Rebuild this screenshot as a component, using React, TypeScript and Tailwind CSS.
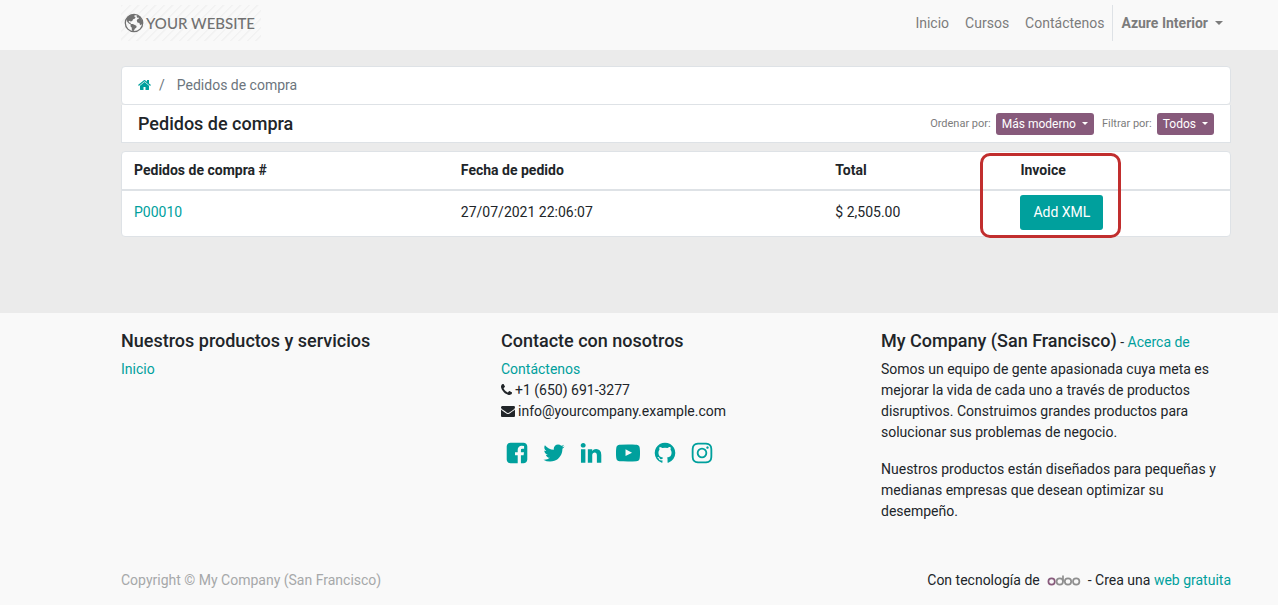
import React from 'react';

const ICONS = {
  home: 'M1472 992v480q0 26-19 45t-45 19h-384v-384h-256v384h-384q-26 0-45-19t-19-45v-480q0-1 .5-3t.5-3l575-474 575 474q1 2 1 6zm223-69l-62 74q-8 9-21 11h-3q-13 0-21-7l-692-577-692 577q-12 8-24 7-13-2-21-11l-62-74q-8-10-7-23.5t11-21.5l719-599q32-26 76-26t76 26l244 204v-195q0-14 9-23t23-9h192q14 0 23 9t9 23v408l219 182q10 8 11 21.5t-7 23.5z',
  phone: 'M1600 1240q0 27-10 70.5t-21 68.5q-21 50-122 106-94 51-186 51-27 0-53-3.5t-57.5-12.5-47-14.5-55.5-20.5-49-18q-98-35-175-83-127-79-264-216t-216-264q-48-77-83-175-3-9-18-49t-20.5-55.5-14.5-47-12.5-57.5-3.5-53q0-92 51-186 56-101 106-122 25-11 68.5-21t70.5-10q14 0 21 3 18 6 53 76 11 19 30 54t35 63.5 31 53.5q3 4 17.5 25t21.5 35.5 7 28.5q0 20-28.5 50t-62 55-62 53-28.5 46q0 9 5 22.5t8.5 20.5 14 24 11.5 19q76 137 174 235t235 174q2 1 19 11.5t24 14 20.5 8.5 22.5 5q18 0 46-28.5t53-62 55-62 50-28.5q14 0 28.5 7t35.5 21.5 25 17.5q25 15 53.5 31t63.5 35 54 30q70 35 76 53 3 7 3 21z',
  envelope: 'M1792 710v794q0 66-47 113t-113 47h-1472q-66 0-113-47t-47-113v-794q44 49 101 87 362 246 497 345 57 42 92.5 65.5t94.5 48 110 24.5h2q51 0 110-24.5t94.5-48 92.5-65.5q170-123 498-345 57-39 100-87zm0-294q0 79-49 151t-122 123q-376 261-468 325-10 7-42.5 31t-54 38.5-52 32.5-57.5 27-50 9h-2q-23 0-50-9t-57.5-27-52-32.5-54-38.5-42.5-31q-91-64-262-182.5t-205-142.5q-62-42-117-115.5t-55-136.5q0-78 41.5-130t118.5-52h1472q65 0 112.5 47t47.5 113z',
  facebook: 'M1376 128q119 0 203.5 84.5t84.5 203.5v960q0 119-84.5 203.5t-203.5 84.5h-188v-595h199l30-232h-229v-148q0-56 23.5-84t91.5-28l122-1v-207q-63-9-178-9-136 0-217.5 80t-81.5 226v171h-200v232h200v595h-532q-119 0-203.5-84.5t-84.5-203.5v-960q0-119 84.5-203.5t203.5-84.5h960z',
  twitter: 'M1684 408q-67 98-162 167 1 14 1 42 0 130-38 259.5t-115.5 248.5-184.5 210.5-258 146-323 54.5q-271 0-496-145 35 4 78 4 225 0 401-138-105-2-188-64.5t-114-159.5q33 5 61 5 43 0 85-11-112-23-185.5-111.5t-73.5-205.5v-4q68 38 146 41-66-44-105-115t-39-154q0-88 44-163 121 149 294.5 238.5t371.5 99.5q-8-38-8-74 0-134 94.5-228.5t228.5-94.5q140 0 236 102 109-21 205-78-37 115-142 178 93-10 186-50z',
  linkedin: 'M477 625v991h-330v-991h330zm21-306q1 73-50.5 122t-135.5 49h-2q-82 0-132-49t-50-122q0-74 51.5-122.5t134.5-48.5 133 48.5 51 122.5zm1166 729v568h-329v-530q0-105-40.5-164.5t-126.5-59.5q-63 0-105.5 34.5t-63.5 85.5q-11 30-11 81v553h-329q2-399 2-647t-1-296l-1-48h329v144h-2q20-32 41-56t56.5-52 87-43.5 114.5-15.5q171 0 275 113.5t104 332.5z',
  youtube: 'M711 1128l484-250-484-253v503zm185-862q168 0 324.5 4.5t229.5 9.5l73 4q1 0 17 1.5t23 3 23.5 4.5 28.5 8 28 13 31 19.5 29 26.5q6 6 15.5 18.5t29 58.5 26.5 101q8 64 12.5 136.5t5.5 113.5v176q1 145-18 290-7 55-25 99.5t-32 61.5l-14 17q-14 15-29 26.5t-31 19-28 12.5-28.5 8-24 4.5-23 3-16.5 1.5q-251 19-627 19-207-2-359.5-6.5t-200.5-7.5l-49-4-36-4q-36-5-54.5-10t-51-21-56.5-41q-6-6-15.5-18.5t-29-58.5-26.5-101q-8-64-12.5-136.5t-5.5-113.5v-176q-1-145 18-290 7-55 25-99.5t32-61.5l14-17q14-15 29-26.5t31-19.5 28-13 28.5-8 23.5-4.5 23-3 17-1.5q251-18 627-18z',
  github: 'M896 128q209 0 385.5 103t279.5 279.5 103 385.5q0 251-146.5 451.5t-378.5 277.5q-27 5-40-7t-13-30q0-3 .5-76.5t.5-134.5q0-97-52-142 57-6 102.5-18t94-39 81-66.5 53-105 20.5-150.5q0-119-79-206 37-91-8-204-28-9-81 11t-92 44l-38 24q-93-26-192-26t-192 26q-16-11-42.5-27t-83.5-38.5-85-13.5q-45 113-8 204-79 87-79 206 0 85 20.5 150t52.5 105 80.5 67 94 39 102.5 18q-39 36-49 103-21 10-45 15t-57 5-65.5-21.5-55.5-62.5q-19-32-48.5-52t-49.5-24l-20-3q-21 0-29 4.5t-5 11.5 9 14 13 12l7 5q22 10 43.5 38t31.5 51l10 23q13 38 44 61.5t67 30 69.5 7 55.5-3.5l23-4q0 38 .5 88.5t.5 54.5q0 18-13 30t-40 7q-232-77-378.5-277.5t-146.5-451.5q0-209 103-385.5t279.5-279.5 385.5-103z',
  instagram: 'M1152 896q0-106-75-181t-181-75-181 75-75 181 75 181 181 75 181-75 75-181zm138 0q0 164-115 279t-279 115-279-115-115-279 115-279 279-115 279 115 115 279zm108-410q0 38-27 65t-65 27-65-27-27-65 27-65 65-27 65 27 27 65zm-502-220q-7 0-76.5-.5t-105.5 0-96.5 3-103 10-71.5 18.5q-50 20-88 58t-58 88q-11 29-18.5 71.5t-10 103-3 96.5 0 105.5.5 76.5-.5 76.5 0 105.5 3 96.5 10 103 18.5 71.5q20 50 58 88t88 58q29 11 71.5 18.5t103 10 96.5 3 105.5 0 76.5-.5 76.5.5 105.5 0 96.5-3 103-10 71.5-18.5q50-20 88-58t58-88q11-29 18.5-71.5t10-103 3-96.5 0-105.5-.5-76.5.5-76.5 0-105.5-3-96.5-10-103-18.5-71.5q-20-50-58-88t-88-58q-29-11-71.5-18.5t-103-10-96.5-3-105.5 0-76.5.5zm768 630q0 229-5 317-10 208-124 322t-322 124q-88 5-317 5t-317-5q-208-10-322-124t-124-322q-5-88-5-317t5-317q10-208 124-322t322-124q88-5 317-5t317 5q208 10 322 124t124 322q5 88 5 317z',
};

type IconName = keyof typeof ICONS;

function Icon({ name, className, viewBox = '0 0 1792 1792' }: { name: IconName; className: string; viewBox?: string }) {
  return (
    <svg viewBox={viewBox} fill="currentColor" aria-hidden="true" className={className}>
      <path d={ICONS[name]} />
    </svg>
  );
}

function Caret({ className }: { className: string }) {
  return (
    <svg viewBox="0 0 8 4" fill="currentColor" aria-hidden="true" className={className}>
      <path d="M0 0h8L4 4z" />
    </svg>
  );
}

function Logo() {
  return (
    <a
      href="#inicio"
      className="flex h-9 w-[140px] items-center bg-[repeating-linear-gradient(135deg,#f2f2f2_0px,#f2f2f2_1px,#f9f9f9_2px,#f9f9f9_6px)] pl-[3px] font-[Lato,sans-serif] text-[15px] font-medium text-[#717171]"
    >
      <svg viewBox="0 0 20 20" fill="currentColor" aria-hidden="true" className="mr-0.5 size-5 shrink-0">
        <circle cx="10" cy="10" r="8.7" fill="none" stroke="currentColor" strokeWidth="1.3" />
        <path d="M2.2 6.2C3.4 3.6 5.6 2 8.2 1.5l2.6.5-.6 1.5 1.3.6-.5 1.5-1.9.7-.9 1.6-1.6.6-.9-.8-1.1.7.6 1.1 1.2.2.6 1.3 1.8-.1 2.1 1.1 1.7.9-.3 1.8-1.5 1.1-.7 1.8-1.3 1-.9-1.5-.1-2.3-1.3-1.5.2-1.7-1.8-1.1-1.5-1.6z" />
        <path d="M13 2.2c2.5.9 4.3 2.9 5 5.4l.2 3.2-1.4 1.4-1-.7-.4-1.6-1.9-.5-.8-1.6.9-1.8 1.5-.5-.7-.9-1.2.2-.5-1.1z" />
      </svg>
      <span className="whitespace-nowrap">YOUR WEBSITE</span>
    </a>
  );
}

const navLinks = ['Inicio', 'Cursos', 'Contáctenos'];

const socials: { name: IconName; label: string }[] = [
  { name: 'facebook', label: 'Facebook' },
  { name: 'twitter', label: 'Twitter' },
  { name: 'linkedin', label: 'LinkedIn' },
  { name: 'youtube', label: 'YouTube' },
  { name: 'github', label: 'GitHub' },
  { name: 'instagram', label: 'Instagram' },
];

function FilterButton({ children }: { children: React.ReactNode }) {
  return (
    <button type="button" className="flex h-[22px] items-center gap-1.5 rounded-[3px] bg-[#875a7b] px-1.5 text-xs text-white">
      {children}
      <Caret className="h-[3px] w-1.5" />
    </button>
  );
}

export default function App() {
  return (
    <div className="flex min-h-screen flex-col bg-[#ebebeb] font-[Roboto,sans-serif] text-sm leading-[21px] text-[#212529]">
      <header className="flex h-[50px] items-start justify-between bg-[#f9f9f9] pt-[5px] pr-[47px] pl-[121px]">
        <Logo />
        <nav className="flex h-9 items-center text-[#7c7c7c]">
          {navLinks.map((label) => (
            <a key={label} href="#nav" className="px-2">
              {label}
            </a>
          ))}
          <button type="button" className="flex h-9 items-center gap-[7px] border-l border-[#dee2e6] px-2 font-bold">
            Azure Interior
            <Caret className="h-1 w-2" />
          </button>
        </nav>
      </header>

      <main className="pt-4 pr-[47px] pb-[76px] pl-[121px]">
        <nav aria-label="Ruta" className="flex h-[39px] items-center rounded border border-[#dee2e6] bg-white px-4 text-[#6c757d]">
          <a href="#inicio" aria-label="Inicio" className="pb-0.5 text-[#00a09d]">
            <Icon name="home" viewBox="64 0 1664 1792" className="h-3.5 w-[13px]" />
          </a>
          <span className="pr-3 pl-2">/</span>
          <span>Pedidos de compra</span>
        </nav>

        <div className="flex h-[38px] items-center justify-between border-x border-b border-[#dee2e6] bg-white px-4">
          <h1 className="text-lg font-medium">Pedidos de compra</h1>
          <div className="flex items-center gap-[5px] text-[11px] text-[#7c7c7c]">
            <span>Ordenar por:</span>
            <FilterButton>Más moderno</FilterButton>
            <span className="ml-[3px]">Filtrar por:</span>
            <FilterButton>Todos</FilterButton>
          </div>
        </div>

        <div className="mt-2 rounded border border-[#dee2e6] bg-white">
          <table className="w-full table-fixed text-left">
            <colgroup>
              <col className="w-[29.5%]" />
              <col className="w-[33.8%]" />
              <col className="w-[16.7%]" />
              <col />
            </colgroup>
            <thead>
              <tr className="h-[38px] border-b-2 border-[#dee2e6]">
                <th className="px-3 font-bold">Pedidos de compra #</th>
                <th className="px-3 font-bold">Fecha de pedido</th>
                <th className="px-3 font-bold">Total</th>
                <th className="px-3 font-bold">
                  <div className="relative">
                    Invoice
                    <div className="pointer-events-none absolute -top-[7px] -left-10 h-[85px] w-[141px] rounded-[10px] border-3 border-[#c12e2e]" />
                  </div>
                </th>
              </tr>
            </thead>
            <tbody>
              <tr className="h-[46px]">
                <td className="px-3 pt-1 pb-1.5">
                  <a href="#pedido" className="text-[#00a09d]">P00010</a>
                </td>
                <td className="px-3 pt-1 pb-1.5">27/07/2021 22:06:07</td>
                <td className="px-3 pt-1 pb-1.5">$ 2,505.00</td>
                <td className="px-3 pt-1 pb-1.5">
                  <button type="button" className="block h-[35px] rounded-[3px] bg-[#00a09d] px-[13px] text-white">
                    Add XML
                  </button>
                </td>
              </tr>
            </tbody>
          </table>
        </div>
      </main>

      <footer className="flex-1 bg-[#f9f9f9] pt-[17px] pr-[47px] pl-[121px]">
        <div className="grid grid-cols-3 gap-[30px]">
          <section>
            <h2 className="mb-[7px] text-lg leading-[22px] font-medium">Nuestros productos y servicios</h2>
            <a href="#inicio" className="text-[#00a09d]">Inicio</a>
          </section>
          <section>
            <h2 className="mb-[7px] text-lg leading-[22px] font-medium">Contacte con nosotros</h2>
            <ul>
              <li>
                <a href="#contacto" className="text-[#00a09d]">Contáctenos</a>
              </li>
              <li className="flex items-center gap-[3px]">
                <Icon name="phone" viewBox="192 0 1408 1792" className="mb-0.5 h-3.5 w-[11px]" />
                +1 (650) 691-3277
              </li>
              <li className="flex items-center gap-[3px]">
                <Icon name="envelope" className="mb-0.5 size-3.5" />
                info@yourcompany.example.com
              </li>
            </ul>
            <div className="mt-[19px] ml-1 flex gap-[13px] text-[#00a09d]">
              {socials.map(({ name, label }) => (
                <a key={name} href="#social" aria-label={label}>
                  <Icon name={name} className="size-6" />
                </a>
              ))}
            </div>
          </section>
          <section>
            <h2 className="mb-[7px] text-lg leading-[22px] font-medium">
              My Company (San Francisco)
              <span className="text-sm font-normal">
                {' - '}
                <a href="#acerca" className="text-[#00a09d]">Acerca de</a>
              </span>
            </h2>
            <p className="mb-4">
              Somos un equipo de gente apasionada cuya meta es mejorar la vida de cada uno a través de productos
              disruptivos. Construimos grandes productos para solucionar sus problemas de negocio.
            </p>
            <p>Nuestros productos están diseñados para pequeñas y medianas empresas que desean optimizar su desempeño.</p>
          </section>
        </div>
        <div className="mt-12 flex items-center justify-between">
          <span className="text-[#a6a8a9]">Copyright © My Company (San Francisco)</span>
          <div className="flex items-center">
            Con tecnología de
            <svg viewBox="0 0 34 12" fill="none" strokeWidth="1.7" role="img" aria-label="odoo" className="mx-[7px] h-3 w-[34px]">
              <circle cx="4.6" cy="6.5" r="3.2" stroke="#875a7b" />
              <g stroke="#8f8f8f">
                <circle cx="12.8" cy="6.5" r="3.2" />
                <path d="M16 6.5V.5" />
                <circle cx="21" cy="6.5" r="3.2" />
                <circle cx="29.2" cy="6.5" r="3.2" />
              </g>
            </svg>
            <span>
              - Crea una <a href="#web" className="text-[#00a09d]">web gratuita</a>
            </span>
          </div>
        </div>
      </footer>
    </div>
  );
}
